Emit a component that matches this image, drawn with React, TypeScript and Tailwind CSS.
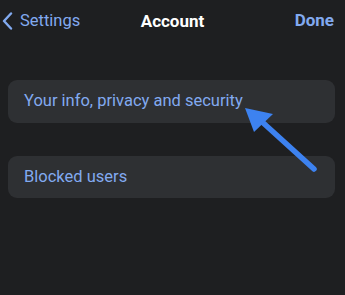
export default function App() {
  return (
    <div className="relative h-[295px] w-[345px] overflow-hidden bg-[#1e1f21] font-['Roboto',sans-serif]">
      <header className="flex h-[42px] items-center justify-between pl-[2px] pr-[11px]">
        <button className="flex items-center gap-[7px] text-[16.5px] text-[#82aaf0]">
          <svg width="11" height="18" viewBox="0 0 11 18" fill="none">
            <path d="M9 1.5 2 9 9 16.5" stroke="#82aaf0" strokeWidth="2.4" strokeLinecap="round" strokeLinejoin="round" />
          </svg>
          <span>Settings</span>
        </button>
        <h1 className="absolute left-1/2 top-[9px] -translate-x-1/2 text-[17px] font-bold text-white">Account</h1>
        <button className="text-[17px] font-bold text-[#82aaf0]">Done</button>
      </header>

      <main className="mt-[38px] flex flex-col gap-[33px] pl-[8px] pr-[10px]">
        <div className="flex h-[43px] items-center rounded-[9px] bg-[#2e3033] px-[16px] text-[16.5px] text-[#82aaf0]">
          Your info, privacy and security
        </div>
        <div className="flex h-[42px] items-center rounded-[9px] bg-[#2e3033] px-[16px] text-[16.5px] text-[#82aaf0]">
          Blocked users
        </div>
      </main>

      <svg className="absolute left-0 top-0" width="345" height="295" viewBox="0 0 345 295">
        <line x1="314" y1="169" x2="260" y2="120" stroke="#3d82f0" strokeWidth="5.5" strokeLinecap="round" />
        <polygon points="245,108 273,114 254,132" fill="#3d82f0" />
      </svg>
    </div>
  );
}
